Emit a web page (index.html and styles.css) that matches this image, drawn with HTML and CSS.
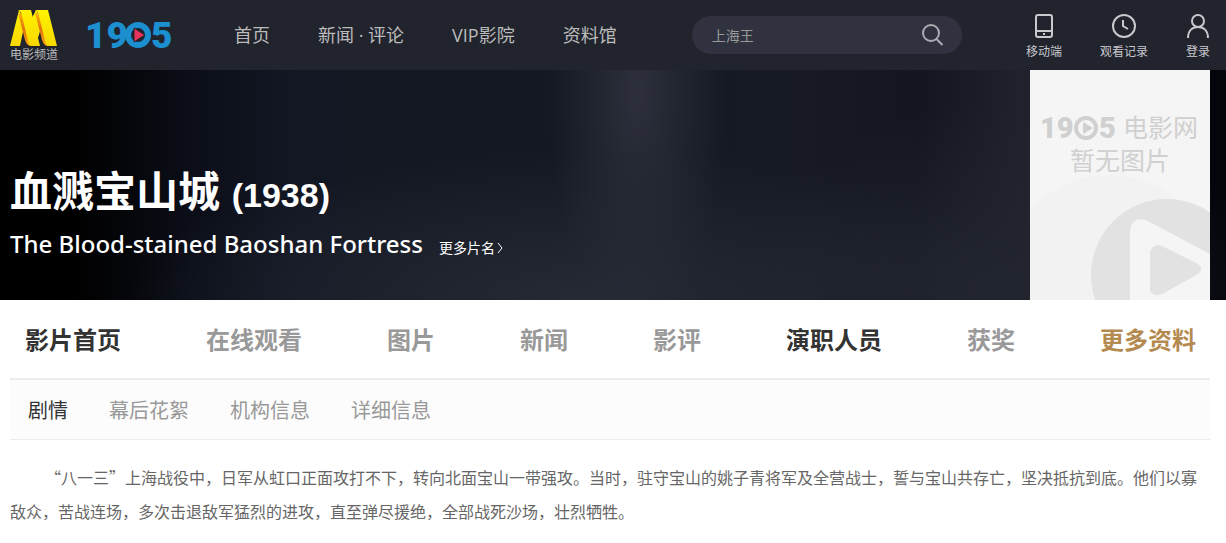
FILE: index.html
```html
<!DOCTYPE html>
<html lang="zh-CN">
<head>
    <meta charset="UTF-8">
    <meta name="viewport" content="width=device-width, initial-scale=1.0">
    <title>血溅宝山城 (1938)</title>
    <link rel="stylesheet" href="styles.css">
</head>
<body>
    <header class="header">
        <a class="channel" href="#">
            <svg width="48" height="37" viewBox="0 0 48 37" aria-hidden="true">
                <defs>
                    <linearGradient id="fold" x1="0" y1="0" x2="0" y2="1">
                        <stop offset="0" stop-color="#f7b20a"/>
                        <stop offset="0.500" stop-color="#e2700c"/>
                        <stop offset="1" stop-color="#f9a80a"/>
                    </linearGradient>
                    <linearGradient id="band" x1="0" y1="0" x2="0" y2="1">
                        <stop offset="0" stop-color="#fff200"/>
                        <stop offset="1" stop-color="#f8d800"/>
                    </linearGradient>
                </defs>
                <path fill="url(#band)" d="M9 0L0 36H10L15 12zM26 0L21 10L26 34L33 12z"/>
                <path fill="url(#fold)" d="M8 3L15 30Q17 36 21 36L13 4zM25 3L32 30Q34 36 38 36L31 4z"/>
                <path fill="url(#band)" d="M8 0H21L30 36H22Q19 36 18 31L12 6Q11 1 8 0zM25 0H38L47 36H39Q36 36 35 31L29 6Q28 1 25 0z"/>
            </svg>
            <span class="channel-name">电影频道</span>
        </a>
        <a class="logo" href="#">
            <svg width="92" height="54" viewBox="-4 -12 92 54">
                <g class="digits">
                    <text x="-3" y="28">19</text>
                    <text x="63" y="28">5</text>
                </g>
                <circle cx="50" cy="15" r="10" fill="none" stroke="#1b8fd0" stroke-width="6"/>
                <path d="M46 8L57 15L46 22z" fill="#e8335a" stroke="#21232d"/>
            </svg>
        </a>
        <nav class="nav">
            <a href="#">首页</a>
            <a href="#">新闻 · 评论</a>
            <a href="#">VIP影院</a>
            <a href="#">资料馆</a>
        </nav>
        <form class="search">
            <input type="text" placeholder="上海王" aria-label="搜索">
            <button type="submit" aria-label="搜索">
                <svg width="22" height="22" viewBox="0 0 22 22" fill="none" stroke="currentColor" stroke-width="2">
                    <circle cx="9" cy="9" r="8"/>
                    <path d="M14.500 15L20.500 21"/>
                </svg>
            </button>
        </form>
        <div class="user">
            <a href="#">
                <svg width="24" height="24" viewBox="0 0 24 24" fill="none" stroke="currentColor" stroke-width="2">
                    <rect x="4" y="1" width="16" height="22" rx="2"/>
                    <path d="M4 17H20M11 20H13"/>
                </svg>
                移动端
            </a>
            <a href="#">
                <svg width="24" height="24" viewBox="0 0 24 24" fill="none" stroke="currentColor" stroke-width="2">
                    <circle cx="12" cy="12" r="11"/>
                    <path d="M11 6V12L16 15"/>
                </svg>
                观看记录
            </a>
            <a href="#">
                <svg width="24" height="24" viewBox="0 0 24 24" fill="none" stroke="currentColor" stroke-width="2">
                    <circle cx="12" cy="7" r="6"/>
                    <path d="M2 24C2 17 6 13 12 13S22 17 22 24"/>
                </svg>
                登录
            </a>
        </div>
    </header>

    <section class="banner">
        <div class="titles">
            <h1>血溅宝山城 <span class="year">(1938)</span></h1>
            <p class="subtitle">The Blood-stained Baoshan Fortress <a href="#">更多片名<svg width="6" height="10" viewBox="0 0 6 10" fill="none" stroke="currentColor"><path d="M1 0L5 5L1 10"/></svg></a></p>
        </div>
        <div class="poster">
            <svg width="180" height="230" viewBox="0 0 180 230">
                <rect width="180" height="230" fill="#f5f5f5"/>
                <circle cx="79" cy="210" r="105" fill="#f2f2f2"/>
                <g fill="#d0d0d0">
                    <g class="poster-digits">
                        <text x="10" y="68">19</text>
                        <text x="69" y="68">5</text>
                    </g>
                    <circle cx="56" cy="58" r="10" fill="none" stroke="#d0d0d0" stroke-width="4"/>
                    <path d="M53 52L63 58L53 64z"/>
                    <text class="poster-text" x="93" y="67">电影网</text>
                    <text class="poster-text" x="40" y="100">暂无图片</text>
                </g>
                <circle cx="137" cy="205" r="76" fill="#e2e2e2"/>
                <path fill="#f5f5f5" d="M100 230V162Q101 146 116 150L180 184V230z"/>
                <path fill="#e2e2e2" d="M120 220V183Q122 173 132 176L168 194Q174 199 168 204L134 223Q122 228 120 220z"/>
            </svg>
        </div>
    </section>

    <main class="content">
        <nav class="tabs">
            <a class="on" href="#">影片首页</a>
            <a href="#">在线观看</a>
            <a href="#">图片</a>
            <a href="#">新闻</a>
            <a href="#">影评</a>
            <a class="on" href="#">演职人员</a>
            <a href="#">获奖</a>
            <a class="more" href="#">更多资料</a>
        </nav>
        <nav class="subtabs">
            <a class="on" href="#">剧情</a>
            <a href="#">幕后花絮</a>
            <a href="#">机构信息</a>
            <a href="#">详细信息</a>
        </nav>
        <p class="plot">“八一三”上海战役中，日军从虹口正面攻打不下，转向北面宝山一带强攻。当时，驻守宝山的姚子青将军及全营战士，誓与宝山共存亡，坚决抵抗到底。他们以寡敌众，苦战连场，多次击退敌军猛烈的进攻，直至弹尽援绝，全部战死沙场，壮烈牺牲。</p>
    </main>
</body>
</html>
```
FILE: styles.css
```css
* {
    box-sizing: border-box;
}

body {
    margin: 0;
    background: #fff;
    color: #666;
    font-family: "Open Sans", "Noto Sans CJK SC", sans-serif;
}

a {
    color: inherit;
    text-decoration: none;
}

svg {
    display: block;
}

/* Top bar */
.header {
    display: flex;
    align-items: center;
    height: 70px;
    padding: 0 16px 0 10px;
    background: #21232d;
    color: #bbb;
}

.channel {
    padding-top: 2px;
    font-size: 12px;
    line-height: 16px;
}

.channel-name {
    display: block;
}

.logo {
    margin-left: 26px;
}

.digits {
    font: 900 37px Roboto, sans-serif;
    fill: #1b8fd0;
}

.nav {
    display: flex;
    gap: 48px;
    margin-left: 58px;
    font-size: 18px;
    line-height: 24px;
    white-space: nowrap;
}

.search {
    display: flex;
    align-items: center;
    width: 270px;
    height: 38px;
    margin-left: 75px;
    padding: 0 18px 0 20px;
    border-radius: 19px;
    background: #30333f;
}

.search input {
    flex: 1;
    min-width: 0;
    padding: 0;
    border: 0;
    outline: 0;
    background: none;
    color: #bbb;
    font: 14px "Noto Sans CJK SC", sans-serif;
}

.search input::placeholder {
    color: #999;
}

.search button {
    padding: 0;
    border: 0;
    background: none;
    color: #aaacb4;
}

.user {
    display: flex;
    gap: 38px;
    margin-left: auto;
    padding-top: 4px;
    color: #c8c9cd;
    font-size: 12px;
    line-height: 16px;
    white-space: nowrap;
}

.user a {
    display: flex;
    flex-direction: column;
    align-items: center;
    gap: 6px;
}

/* Film banner */
.banner {
    display: flex;
    justify-content: space-between;
    align-items: flex-end;
    height: 230px;
    padding: 0 16px 0 10px;
    background:
        radial-gradient(ellipse 90px 240px at 52% 10%, #2d303c, transparent),
        radial-gradient(ellipse 460px 150px at 48% 100%, #262a35, transparent),
        radial-gradient(ellipse 260px 200px at 82% 100%, #22252e, transparent),
        linear-gradient(to right, #000 0, #000 6%, #0c0f19 16%, #131723 24%, #141820 45%, #171a22 65%, #13161e 75%, #20232d 84%, #03050a 99%);
}

.titles {
    padding-bottom: 38px;
    color: #fff;
}

.titles h1 {
    margin: 0;
    font: bold 42px/56px "Liberation Sans", "Noto Sans CJK SC", sans-serif;
}

.year {
    font-size: 34px;
}

.subtitle {
    display: flex;
    align-items: baseline;
    gap: 16px;
    margin: 3px 0 0;
    font-family: "Noto Sans", "Noto Sans CJK SC", sans-serif;
    font-size: 24px;
    font-weight: 500;
    line-height: 36px;
}

.subtitle a {
    display: flex;
    align-items: center;
    gap: 2px;
    font-size: 14px;
    font-weight: normal;
    line-height: 20px;
}

.poster-digits {
    font: 900 29px Roboto, sans-serif;
}

.poster-text {
    font: 25px "Noto Sans CJK SC", sans-serif;
}

/* Film pages */
.content {
    padding: 0 16px 0 10px;
}

.tabs {
    display: flex;
    justify-content: space-between;
    padding: 20px 14px 18px 15px;
    border-bottom: 2px solid #ececec;
    color: #999;
    font-size: 24px;
    font-weight: bold;
    line-height: 40px;
}

.on {
    color: #333;
}

.more {
    color: #b48a50;
}

.subtabs {
    display: flex;
    gap: 41px;
    padding: 11px 18px 8px;
    border-bottom: 1px solid #ececec;
    background: #fcfcfc;
    color: #999;
    font-size: 20px;
    line-height: 40px;
}

.plot {
    margin: 20px 0;
    font-family: "Noto Sans CJK SC", sans-serif;
    font-size: 16px;
    line-height: 34px;
    text-indent: 35px;
}
```
